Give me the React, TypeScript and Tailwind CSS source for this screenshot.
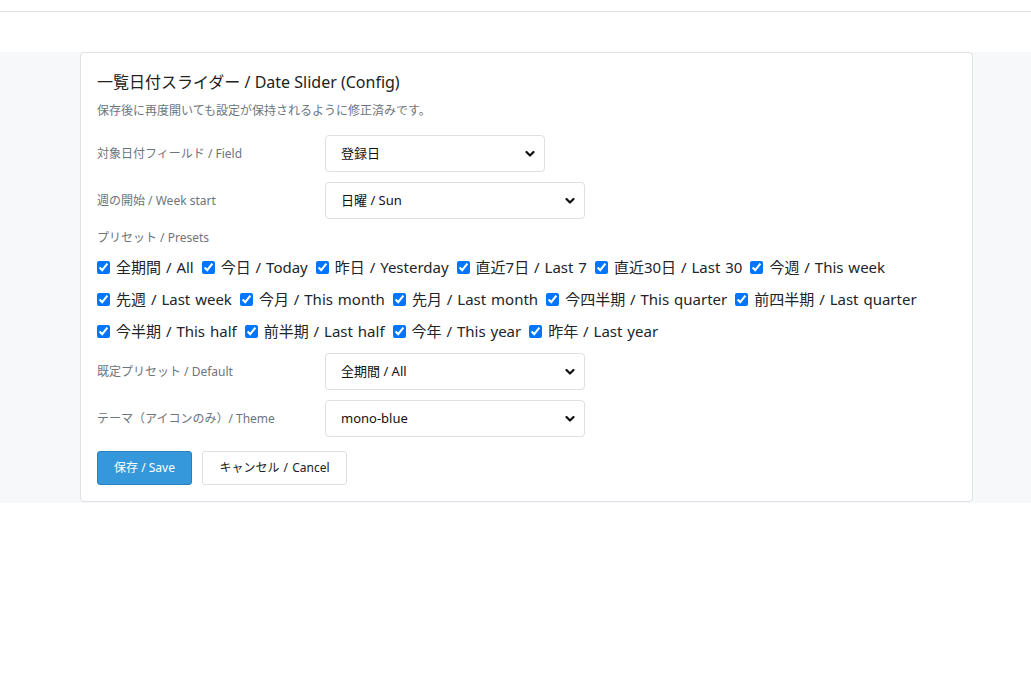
import React from 'react';

const presetRows: string[][] = [
  ['全期間 / All', '今日 / Today', '昨日 / Yesterday', '直近7日 / Last 7', '直近30日 / Last 30', '今週 / This week'],
  ['先週 / Last week', '今月 / This month', '先月 / Last month', '今四半期 / This quarter', '前四半期 / Last quarter'],
  ['今半期 / This half', '前半期 / Last half', '今年 / This year', '昨年 / Last year'],
];

function Chevron() {
  return (
    <svg width="10" height="7" viewBox="0 0 10 7" className="pointer-events-none absolute right-[10px] top-1/2 -translate-y-1/2">
      <path d="M1.5 1.5 L5 5 L8.5 1.5" fill="none" stroke="#111" strokeWidth="2.2" strokeLinecap="round" strokeLinejoin="round" />
    </svg>
  );
}

function Select({ value, width }: { value: string; width: string }) {
  return (
    <div className={`relative ${width}`}>
      <select
        defaultValue={value}
        className="h-[37px] w-full appearance-none rounded-[4px] border border-[#dcdfe4] bg-white pl-[15px] pr-8 text-[13px] text-[#111] outline-none"
      >
        <option>{value}</option>
      </select>
      <Chevron />
    </div>
  );
}

function FieldRow({ label, children }: { label: string; children: React.ReactNode }) {
  return (
    <div className="flex items-center">
      <div className="w-[228px] text-[12px] text-[#6c757d]">{label}</div>
      {children}
    </div>
  );
}

export default function App() {
  return (
    <div className="min-h-[693px] bg-white" style={{ fontFamily: '"Noto Sans", "Noto Sans CJK JP", sans-serif' }}>
      {/* top bar */}
      <div className="h-[12px] border-b border-[#dedede]" />

      <div className="mt-[40px] bg-[#f7f8fa] pb-px">
        <div className="ml-[80px] w-[893px] rounded-[4px] border border-[#dfe1e6] bg-white px-4 pt-[17px] pb-4">
          <h1 className="text-[16px] leading-[24px] text-[#222]">一覧日付スライダー / Date Slider (Config)</h1>
          <p className="mt-[8px] text-[12px] leading-[17px] text-[#6c757d]">保存後に再度開いても設定が保持されるように修正済みです。</p>

          <div className="mt-[16px] flex flex-col gap-[10px]">
            <FieldRow label="対象日付フィールド / Field">
              <Select value="登録日" width="w-[220px]" />
            </FieldRow>
            <FieldRow label="週の開始 / Week start">
              <Select value="日曜 / Sun" width="w-[260px]" />
            </FieldRow>
          </div>

          <div className="mt-[10px] text-[12px] leading-[17px] text-[#6c757d]">プリセット / Presets</div>
          <div className="mt-[5px]">
            {presetRows.map((row, i) => (
              <div key={i} className="flex h-[32px] items-center gap-[8px]">
                {row.map((p) => (
                  <label key={p} className="flex items-center gap-[6px] text-[15px] text-[#212529] [word-spacing:1px]">
                    <input type="checkbox" defaultChecked className="m-0 h-[13px] w-[13px] accent-[#0075ff]" />
                    {p}
                  </label>
                ))}
              </div>
            ))}
          </div>

          <div className="mt-[6px] flex flex-col gap-[10px]">
            <FieldRow label="既定プリセット / Default">
              <Select value="全期間 / All" width="w-[260px]" />
            </FieldRow>
            <FieldRow label="テーマ（アイコンのみ）/ Theme">
              <Select value="mono-blue" width="w-[260px]" />
            </FieldRow>
          </div>

          <div className="mt-[14px] flex gap-[10px]">
            <button className="h-[34px] w-[95px] rounded-[3px] border border-[#2b7cc0] bg-[#3498db] text-[12px] text-white">保存 / Save</button>
            <button className="h-[34px] w-[145px] rounded-[3px] border border-[#dcdfe4] bg-white text-[12px] text-[#222] [word-spacing:1px]">キャンセル / Cancel</button>
          </div>
        </div>
      </div>
    </div>
  );
}
